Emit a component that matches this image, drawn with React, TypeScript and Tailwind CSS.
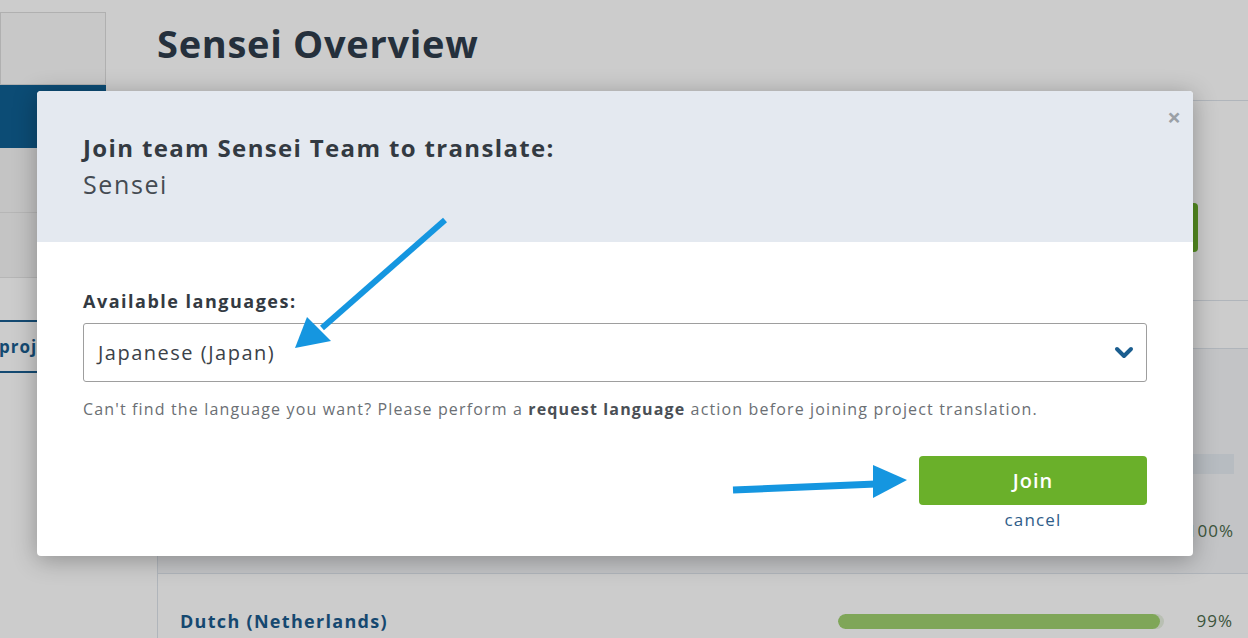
import React from 'react';

const font = { fontFamily: '"Open Sans", Lato, sans-serif' };

const Background: React.FC = () => (
    <div className="absolute inset-0 flex bg-white">
        {/* sidebar */}
        <div className="w-[106px] shrink-0 pt-[12px]">
            <div className="h-[73px] border border-[#dcdcdc] bg-[#fafafa]"></div>
            <div className="h-[63px] bg-[#0f5f93]"></div>
            <div className="h-[65px] border-b border-[#e4e4e4] bg-[#f6f6f6]"></div>
            <div className="h-[65px] border-b border-[#e4e4e4] bg-[#f6f6f6]"></div>
            <div className="mt-[42px] h-[53px] border-y-2 border-[#1a5d8f] flex items-center text-[17px] font-bold text-[#1a5d8f] tracking-[1px]">
                <span className="-ml-[1px]">project</span>
            </div>
        </div>
        {/* main */}
        <div className="flex-1 pl-[51px] pt-[18px]">
            <h1 className="text-[38px] font-bold text-[#2f3d4c] leading-[50px] tracking-[0.7px]">Sensei Overview</h1>
            <div className="mt-[32px] h-[600px] border-l border-t border-[#dde3ea] bg-white">
                <div className="flex justify-end h-[200px] border-b border-[#dde3ea] pt-[102px] pr-[50px]">
                    <div className="w-[130px] h-[49px] rounded bg-[#6ab02a]"></div>
                </div>
                <div className="h-[48px] border-b border-[#dde3ea]"></div>
                <div className="h-[225px] border-b border-[#dde3ea] bg-[#f4f6f8] flex flex-col items-end pr-[14px]">
                    <div className="mt-[105px] w-[250px] h-[20px] bg-[#e5ebf2]"></div>
                    <div className="mt-[44px] text-[17px] text-[#4b6a4b] tracking-[1px]">100%</div>
                </div>
                <div className="flex items-center h-[92px] pl-[22px] pr-[15px] pt-[2px]">
                    <span className="text-[18px] font-bold text-[#1b5a8c] tracking-[1.3px]">Dutch (Netherlands)</span>
                    <div className="ml-auto w-[326px] h-[15px] rounded-full bg-[#e8f0e0] overflow-hidden">
                        <div className="h-full rounded-full bg-[#9fd06f]" style={{ width: '99%' }}></div>
                    </div>
                    <span className="ml-[33px] text-[17px] text-[#4b6a4b] tracking-[1px]">99%</span>
                </div>
            </div>
        </div>
        <div className="absolute inset-0 bg-black/20"></div>
    </div>
);

const Arrows: React.FC = () => (
    <svg className="absolute inset-0 pointer-events-none" width="1248" height="638">
        <line x1="445" y1="220" x2="322" y2="328" stroke="#1596e0" strokeWidth="6" strokeLinecap="butt" />
        <polygon points="295,348 307,317 331,341" fill="#1596e0" />
        <line x1="733" y1="490" x2="876" y2="484" stroke="#1596e0" strokeWidth="7" />
        <polygon points="907,480 873,465 873,498" fill="#1596e0" />
    </svg>
);

export default function App() {
    return (
        <div className="relative w-[1248px] h-[638px] overflow-hidden" style={font}>
            <Background />

            <div className="absolute left-[37px] top-[91px] w-[1156px] rounded-[4px] bg-white shadow-[0_4px_24px_rgba(0,0,0,0.3)] overflow-hidden">
                <div className="relative h-[151px] bg-[#e4e9f0] px-[46px] pt-[42px]">
                    <button className="absolute right-[12px] top-[14px] text-[24px] leading-none font-bold text-[#9aa0a6]">×</button>
                    <h2 className="text-[24px] font-bold text-[#333a42] leading-[30px] tracking-[1.35px]">Join team Sensei Team to translate:</h2>
                    <div className="mt-[6px] text-[25px] text-[#444b52] leading-[30px] tracking-[1.6px]">Sensei</div>
                </div>
                <div className="px-[46px] pt-[47px] pb-[23px]">
                    <label className="block text-[18px] font-bold text-[#333a42] leading-[24px] tracking-[1.5px]">Available languages:</label>
                    <div className="mt-[10px] h-[59px] flex items-center justify-between border border-[#9e9e9e] rounded-[3px] pl-[14px] pr-[12px]">
                        <span className="text-[20px] text-[#3b4148] tracking-[1.5px]">Japanese (Japan)</span>
                        <svg width="20" height="14" viewBox="0 0 20 14">
                            <path d="M3 3 L10 10 L17 3" stroke="#1a5d8f" strokeWidth="4" fill="none" strokeLinecap="round" strokeLinejoin="round" />
                        </svg>
                    </div>
                    <p className="mt-[15px] text-[16px] text-[#6b6f74] tracking-[1.15px] leading-[24px]">
                        Can't find the language you want? Please perform a <span className="font-bold text-[#4a4f55]">request language</span> action before joining project translation.
                    </p>
                    <div className="mt-[35px] flex flex-col items-end">
                        <button className="w-[228px] h-[49px] rounded-[4px] bg-[#6ab02a] text-white text-[20px] font-semibold tracking-[1px]">Join</button>
                        <a className="mt-[2px] w-[228px] text-center text-[17px] text-[#2f5d8a] tracking-[1.2px]">cancel</a>
                    </div>
                </div>
            </div>

            <Arrows />
        </div>
    );
}
